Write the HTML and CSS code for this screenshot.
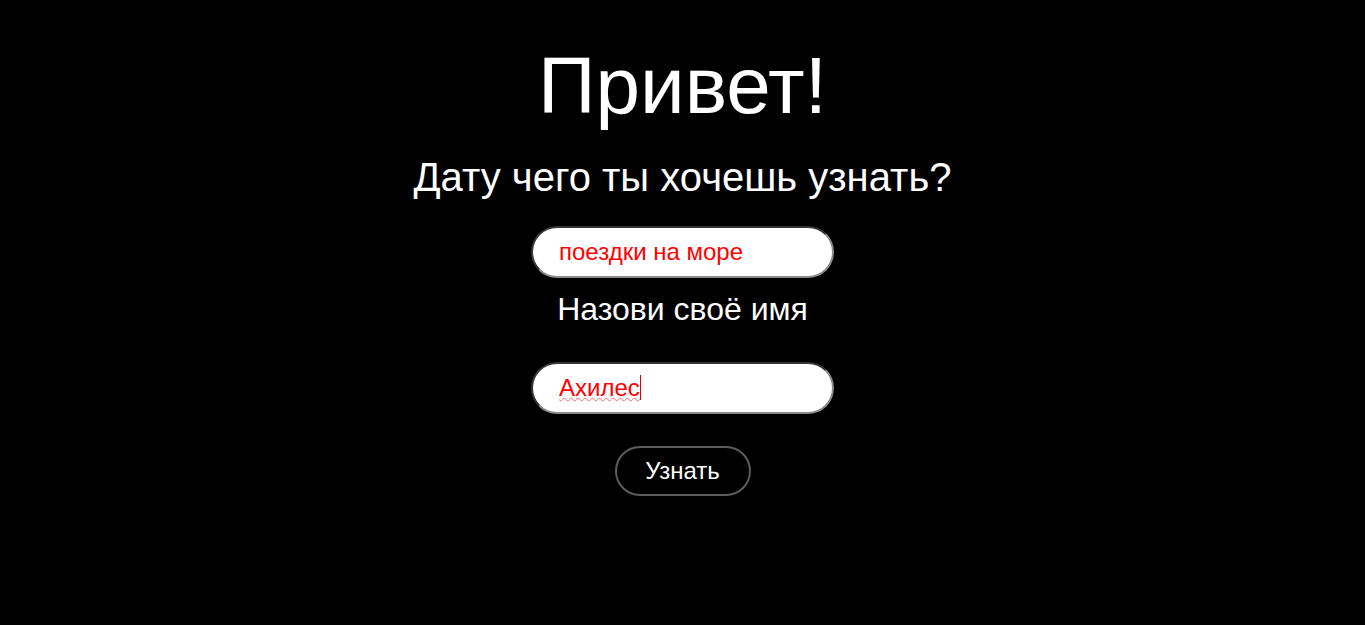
FILE: index.html
```html
<!DOCTYPE html>
<html lang="ru">
<head>
<meta charset="utf-8">
<title>Привет!</title>
<link rel="stylesheet" href="styles.css">
</head>
<body>
<main class="page">
  <h1 class="title">Привет!</h1>
  <p class="question">Дату чего ты хочешь узнать?</p>
  <input class="field field-what" type="text" value="поездки на море" spellcheck="false">
  <p class="label">Назови своё имя</p>
  <div class="field-wrap">
    <input class="field field-name" type="text" value="Ахилес" spellcheck="false">
    <span class="caret"></span>
  </div>
  <button class="btn" type="button">Узнать</button>
</main>
</body>
</html>
```

FILE: styles.css
```css
html, body {
  margin: 0;
  padding: 0;
  background: #000;
}
body {
  font-family: "Liberation Sans", Arial, sans-serif;
  color: #fff;
}
.page {
  display: flex;
  flex-direction: column;
  align-items: center;
}
.title {
  margin: 40px 0 0;
  font-size: 80px;
  font-weight: normal;
  line-height: 92px;
}
.question {
  margin: 22px 0 0;
  font-size: 40px;
  line-height: 46px;
}
.field {
  box-sizing: border-box;
  display: block;
  width: 303px;
  height: 52px;
  padding: 0 26px;
  border: 2px inset #8a8a8a;
  border-radius: 26px;
  background: #fff;
  color: #ff0000;
  caret-color: #ff0000;
  font-family: "Liberation Sans", Arial, sans-serif;
  font-size: 24px;
  outline: none;
}
.field-what {
  margin-top: 26px;
}
.label {
  margin: 13px 0 0;
  font-size: 32px;
  line-height: 37px;
}
.field-wrap {
  position: relative;
  margin-top: 34px;
}
.field-name {
  text-decoration: underline wavy #ff6a6a;
  text-decoration-thickness: 1px;
  text-underline-offset: 1px;
}
.caret {
  position: absolute;
  left: 109px;
  top: 13px;
  width: 1px;
  height: 25px;
  background: #e00000;
}
.btn {
  box-sizing: border-box;
  width: 136px;
  height: 50px;
  margin-top: 32px;
  border: 2px solid #5c5c5c;
  border-radius: 25px;
  background: #000;
  color: #fff;
  font-family: "Liberation Sans", Arial, sans-serif;
  font-size: 24px;
}
```
